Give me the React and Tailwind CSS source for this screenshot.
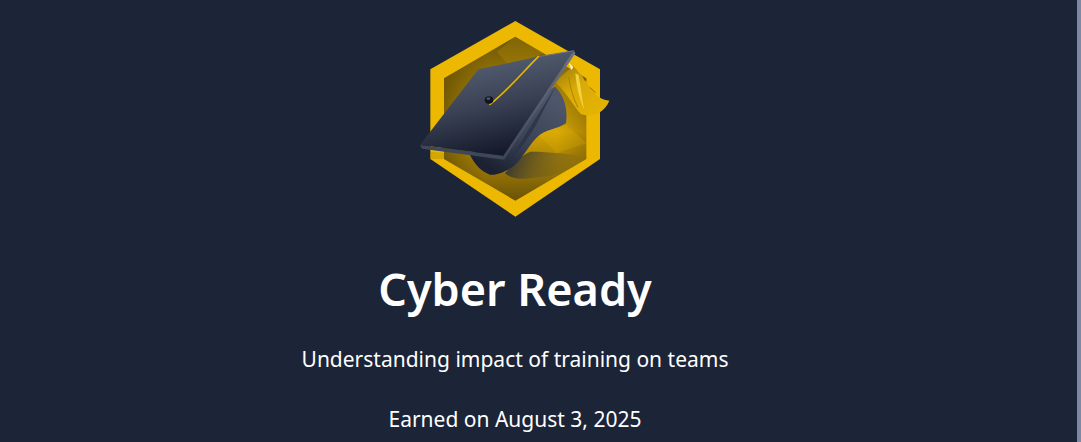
const CapBadge = () => (
  <svg width="210" height="215" viewBox="0 0 630 645" className="block shrink-0">
    <defs>
      <linearGradient id="inner" x1="0" y1="0" x2="0" y2="1">
        <stop offset="0" stopColor="#6a5207" />
        <stop offset="0.3" stopColor="#a17d05" />
        <stop offset="0.58" stopColor="#d6a503" />
        <stop offset="0.78" stopColor="#a07c04" />
        <stop offset="1" stopColor="#6a5207" />
      </linearGradient>
      <linearGradient id="innerSide" x1="0" y1="0" x2="1" y2="0">
        <stop offset="0" stopColor="#5c4706" stopOpacity="0.7" />
        <stop offset="0.3" stopColor="#5c4706" stopOpacity="0" />
        <stop offset="0.8" stopColor="#5c4706" stopOpacity="0" />
        <stop offset="1" stopColor="#5c4706" stopOpacity="0.35" />
      </linearGradient>
      <linearGradient id="board" x1="0.32" y1="0.08" x2="0.6" y2="0.95">
        <stop offset="0" stopColor="#565f73" />
        <stop offset="0.5" stopColor="#3a4155" />
        <stop offset="1" stopColor="#141a2a" />
      </linearGradient>
      <linearGradient id="skull" x1="0.8" y1="0.1" x2="0.25" y2="0.95">
        <stop offset="0" stopColor="#4e566b" />
        <stop offset="0.55" stopColor="#3a4256" />
        <stop offset="1" stopColor="#1b2130" />
      </linearGradient>
      <linearGradient id="shade" x1="0" y1="0" x2="1" y2="0.15">
        <stop offset="0" stopColor="#2a2e38" />
        <stop offset="0.45" stopColor="#6b5a1e" stopOpacity="0.85" />
        <stop offset="1" stopColor="#8c6f10" stopOpacity="0.3" />
      </linearGradient>
      <linearGradient id="tassel" x1="0" y1="0" x2="0.8" y2="1">
        <stop offset="0" stopColor="#9c7a0a" />
        <stop offset="0.45" stopColor="#d9ab06" />
        <stop offset="1" stopColor="#e4b304" />
      </linearGradient>
      <linearGradient id="edgeSide" x1="1" y1="0" x2="0" y2="1">
        <stop offset="0" stopColor="#6b7488" />
        <stop offset="1" stopColor="#3d4559" />
      </linearGradient>
    </defs>

    <polygon points="316,33 570,178 570,447 316,620 61,447 61,178" fill="#ecb802" />
    <polygon points="316,80 529,205 529,447 316,572 102,447 102,205" fill="url(#inner)" />
    <polygon points="316,80 529,205 529,447 316,572 102,447 102,205" fill="url(#innerSide)" />
    <polygon points="260,125 316,80 400,130 300,170" fill="#c49a08" opacity="0.25" />
    <polygon points="380,370 470,345 529,400 440,430" fill="#f2c10a" opacity="0.18" />
    <polygon points="61,425 102,428 102,447 61,447" fill="#7a6006" opacity="0.2" />

    <path d="M285 490 C320 450 345 430 362 425 C420 425 480 432 525 440 C490 480 430 500 380 502 C340 510 305 508 285 490 Z" fill="url(#shade)" />

    <path d="M490 168 C478 178 455 195 438 218 C462 240 490 285 512 312 C540 322 580 315 598 272 C580 270 560 262 545 240 C530 215 510 190 490 168 Z" fill="url(#tassel)" />
    <path d="M496 190 C500 235 510 270 522 298 C516 265 512 230 506 195 Z" fill="#f7d84a" opacity="0.85" />
    <path d="M476 200 C482 240 492 270 504 292" fill="none" stroke="#a8830a" strokeWidth="3" />
    <path d="M518 200 L530 210 L524 212 Z" fill="#7a6006" />
    <path d="M540 232 L556 248" fill="none" stroke="#8c6f10" strokeWidth="3" />
    <path d="M476 158 L490 172 L484 180 Z" fill="#fff6d0" />

    <path d="M435 230 C462 255 474 295 468 340 C440 358 405 360 385 378 C360 400 345 435 315 465 C290 485 260 497 240 494 C215 485 195 465 180 435 L300 300 Z" fill="url(#skull)" />
    <path d="M438 228 L300 448 C330 420 350 390 375 350 Z" fill="#2b3245" opacity="0.8" />

    <polygon points="30,405 280,437 282,449 36,416" fill="#3f475b" />
    <polygon points="492,122 496,130 282,449 280,437" fill="url(#edgeSide)" />
    <polygon points="30,405 205,178 385,140 492,122 280,437" fill="url(#board)" />

    <path d="M385 140 L492 122" fill="none" stroke="#6a7286" strokeWidth="3" />
    <path d="M240 283 C290 245 335 190 385 140" fill="none" stroke="#e6b405" strokeWidth="5" strokeLinecap="round" />
    <ellipse cx="237" cy="270" rx="13" ry="11" fill="#0f1421" />
    <ellipse cx="235" cy="266" rx="6" ry="4" fill="#4b5367" />
  </svg>
);

export default function App() {
  return (
    <div className="h-[442px] overflow-hidden flex bg-[#1c2438] text-white font-['Noto_Sans',sans-serif]">
      <main className="flex-1 flex flex-col items-center pt-[10px] pr-[47px]">
        <CapBadge />
        <h1 className="mt-[33px] text-[45px] leading-[62px] font-semibold">Cyber Ready</h1>
        <p className="mt-[24px] text-[21px] leading-[30px]">Understanding impact of training on teams</p>
        <p className="mt-[30px] text-[21px] leading-[30px]">Earned on August 3, 2025</p>
      </main>
      <div className="w-1 bg-[#7f88a3]" />
    </div>
  );
}
